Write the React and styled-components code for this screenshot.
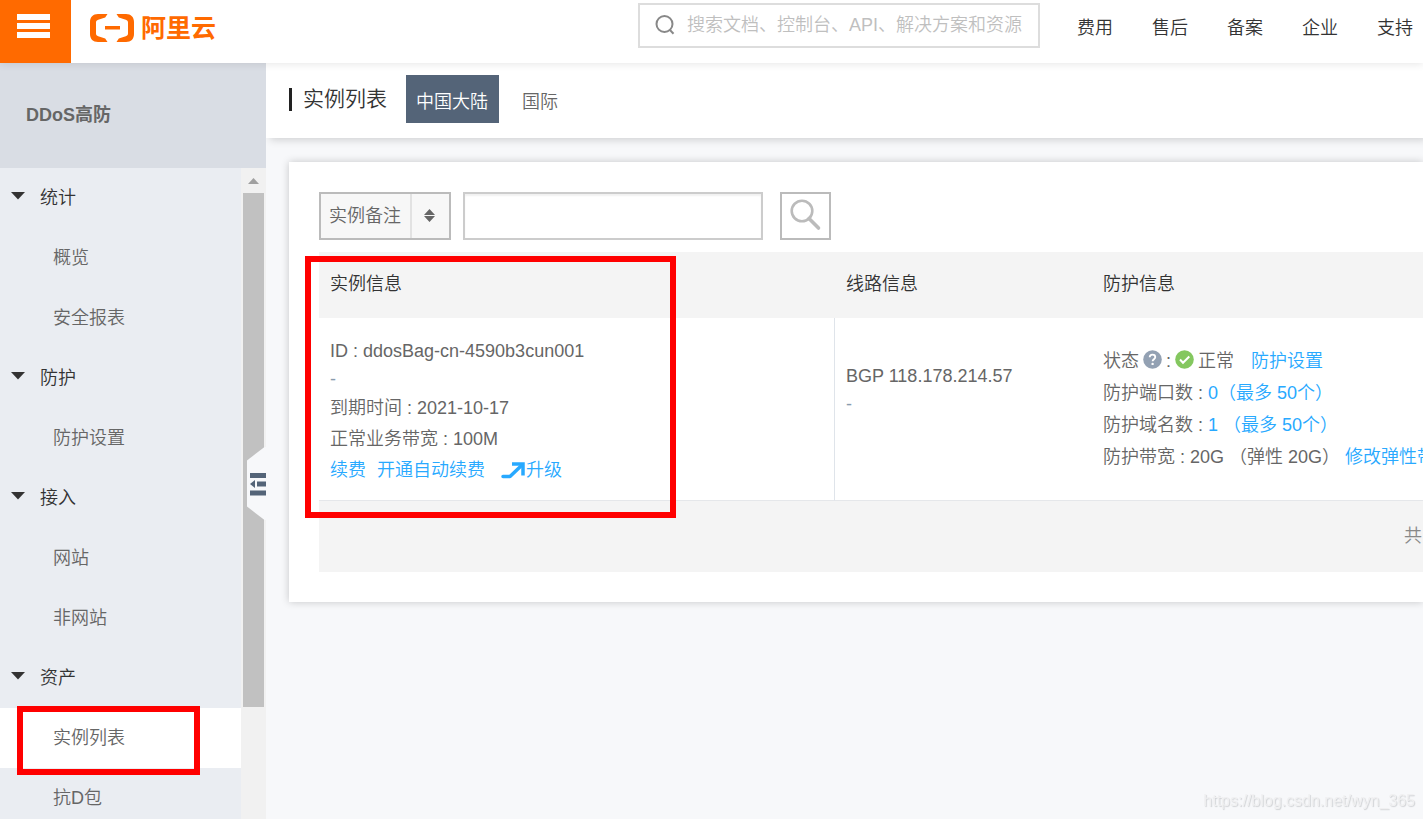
import React from "react";
import styled, { createGlobalStyle } from "styled-components";

const GlobalStyle = createGlobalStyle`
  *, *::before, *::after { box-sizing: border-box; }
  body {
    margin: 0;
    background: #f7f8fa;
    color: #666;
    font-family: "Liberation Sans", "Noto Sans CJK SC", sans-serif;
    font-size: 18px;
    font-weight: 350;
  }
  button, input, select { font: inherit; color: inherit; margin: 0; border-radius: 0; }
  a { text-decoration: none; color: inherit; }
`;

const Page = styled.div`
  display: flex;
  flex-direction: column;
  height: 100vh;
  overflow: hidden;
`;

/* ---------- top bar ---------- */

const TopBar = styled.header`
  position: relative;
  z-index: 2;
  display: flex;
  align-items: flex-start;
  flex: none;
  height: 63px;
  background: #fff;
  box-shadow: 0 1px 8px rgba(0, 0, 0, 0.1);
`;

const MenuButton = styled.button`
  display: flex;
  flex-direction: column;
  gap: 3px;
  width: 71px;
  height: 63px;
  padding: 14px 21px 0 17px;
  border: 0;
  background: #ff6a00;
`;

const MenuBar = styled.span`
  height: 6px;
  width: 33px;
  background: #fff;
`;

const Logo = styled.a`
  display: flex;
  align-items: center;
  gap: 7px;
  height: 56px;
  margin-left: 19px;
  color: #ff6a00;
`;

const LogoName = styled.span`
  padding-bottom: 4px;
  font-size: 25px;
  font-weight: 700;
`;

const SearchBox = styled.label`
  display: flex;
  align-items: center;
  gap: 11px;
  width: 402px;
  height: 45px;
  margin: 3px 37px 0 auto;
  padding: 0 14px;
  border: 2px solid #ddd;
  svg { margin-bottom: 1px; }
`;

const SearchInput = styled.input`
  flex: 1;
  min-width: 0;
  padding: 0;
  border: 0;
  outline: 0;
  background: none;
  &::placeholder { color: #bfbfbf; opacity: 1; }
`;

const TopNav = styled.nav`
  display: flex;
  gap: 39px;
  margin-right: 10px;
  color: #333;
  line-height: 56px;
  white-space: nowrap;
`;

/* ---------- sidebar ---------- */

const Body = styled.div`
  display: flex;
  flex: 1;
  min-height: 0;
`;

const Sidebar = styled.aside`
  position: relative;
  display: flex;
  flex-direction: column;
  flex: none;
  width: 266px;
  background: #eaedf2;
`;

const SidebarTitle = styled.h2`
  flex: none;
  height: 105px;
  margin: 0;
  padding-left: 26px;
  background: #d9dde4;
  font-size: 18px;
  font-weight: 700;
  line-height: 105px;
`;

const SidebarBody = styled.div`
  display: flex;
  flex: 1;
  min-height: 0;
`;

const SideNav = styled.nav`
  flex: 1;
  overflow: hidden;
`;

const GroupButton = styled.button`
  display: flex;
  align-items: center;
  gap: 15px;
  width: 100%;
  height: 60px;
  padding: 0 12px 4px 11px;
  border: 0;
  background: none;
  color: #333;
`;

const SideLink = styled.a`
  position: relative;
  display: block;
  height: 60px;
  padding-left: 53px;
  line-height: 60px;
  background: ${(p) => (p.$active ? "#fff" : "transparent")};
`;

const Track = styled.div`
  display: flex;
  flex-direction: column;
  width: 25px;
  padding: 0 2px;
  background: #f1f1f1;
`;

const TrackArrow = styled.span`
  display: flex;
  align-items: center;
  justify-content: center;
  flex: none;
  height: 25px;
`;

const Thumb = styled.div`
  height: 79%;
  width: 21px;
  background: #c1c1c1;
`;

const CollapseButton = styled.button`
  position: absolute;
  right: 0;
  top: 384px;
  width: 19px;
  height: 73px;
  padding: 0;
  border: 0;
  background: none;
  svg { display: block; }
`;

/* ---------- content ---------- */

const Main = styled.main`
  flex: 1;
  min-width: 0;
  overflow: hidden;
`;

const TitleBar = styled.div`
  display: flex;
  align-items: center;
  height: 75px;
  padding: 0 0 3px 23px;
  background: #fff;
  box-shadow: 4px 2px 8px rgba(0, 0, 0, 0.16);
`;

const Title = styled.h1`
  display: flex;
  align-items: center;
  gap: 11px;
  margin: 0 19px 0 0;
  color: #333;
  font-size: 21px;
  font-weight: 350;
  white-space: nowrap;
  line-height: 30px;
  &::before { content: ""; width: 3px; height: 23px; background: #222; }
`;

const Tab = styled.button`
  height: 48px;
  margin-right: 13px;
  padding: 1px 11px 0 10px;
  border: 0;
  background: ${(p) => (p.$active ? "#546478" : "transparent")};
  color: ${(p) => (p.$active ? "#fff" : "#666")};
`;

const Card = styled.section`
  margin: 24px 0 0 23px;
  padding: 30px 0 30px 30px;
  background: #fff;
  box-shadow: 0 0 8px rgba(0, 0, 0, 0.2);
`;

const Filters = styled.form`
  display: flex;
  height: 48px;
  margin-bottom: 12px;
`;

const SelectBox = styled.div`
  display: grid;
  grid-template-columns: 89px 39px;
  width: 132px;
  margin-right: 12px;
  border: 2px solid #bbb;
  background: #f7f7f7;
`;

const Select = styled.select`
  grid-area: 1 / 1 / 2 / 3;
  appearance: none;
  padding: 0 0 0 8px;
  border: 0;
  outline: 0;
  background: none;
`;

const SelectMark = styled.span`
  grid-area: 1 / 2 / 2 / 3;
  display: flex;
  align-items: center;
  justify-content: center;
  padding: 0 2px 2px 0;
  border-left: 2px solid #e2e2e2;
  pointer-events: none;
`;

const FilterInput = styled.input`
  width: 300px;
  margin-right: 17px;
  padding: 0 10px;
  border: 2px solid #ccc;
  background: #fff;
  box-shadow: inset 0 2px 2px rgba(0, 0, 0, 0.06);
`;

const FilterButton = styled.button`
  width: 51px;
  padding: 0;
  border: 2px solid #bbb;
  background: #fff;
  svg { display: block; margin: 0 0 2px 8px; }
`;

const Table = styled.table`
  width: 100%;
  table-layout: fixed;
  border-collapse: separate;
  border-spacing: 0;
`;

const Col = styled.col`
  width: ${(p) => p.$width};
`;

const Th = styled.th`
  height: 66px;
  padding: 0 11px 6px;
  background: #f4f4f4;
  color: #333;
  font-weight: 350;
  text-align: left;
`;

const Td = styled.td`
  position: relative;
  height: 183px;
  padding: ${(p) => p.$above || "0"} 0 ${(p) => p.$below || "0"} 11px;
  border-bottom: 1px solid #e5e7ea;
  border-right: ${(p) => (p.$divided ? "1px solid #dfe4ea" : "0")};
  overflow: ${(p) => (p.$clip ? "hidden" : "visible")};
  white-space: nowrap;
  vertical-align: middle;
`;

const Line = styled.div`
  display: flex;
  align-items: center;
  height: ${(p) => p.$height};
  line-height: ${(p) => p.$height};
  gap: ${(p) => p.$gap || "0"};
  white-space: pre;
  color: ${(p) => (p.$faint ? "#8a9bae" : "inherit")};
`;

const StatusLine = styled(Line)`
  svg { margin-bottom: 4px; }
`;

const Link = styled.a`
  color: #28a9ff;
`;

const UpgradeLink = styled(Link)`
  display: flex;
  align-items: center;
  gap: 1px;
  margin-left: 5px;
`;

const SettingsLink = styled(Link)`
  margin-left: 13px;
`;

const FootCell = styled.td`
  height: 71px;
  padding: 0 1px 5px 0;
  background: #f4f4f4;
  color: #888;
  text-align: right;
`;

/* ---------- overlays ---------- */

const RedFrame = styled.span`
  position: absolute;
  border: 6px solid #f00;
  pointer-events: none;
`;

const LinkFrame = styled(RedFrame)`
  top: -2px;
  left: 17px;
  width: 183px;
  height: 69px;
`;

const CellFrame = styled(RedFrame)`
  top: -62px;
  left: -14px;
  width: 371px;
  height: 262px;
`;

const Watermark = styled.span`
  position: fixed;
  right: 8px;
  bottom: 8px;
  color: #f0f0f1;
  font-size: 16px;
  line-height: 20px;
  text-shadow: 1px 1px 1px #d0d2d5;
`;

/* ---------- icons ---------- */

const LogoMark = () => (
  <svg width="44" height="28" viewBox="0 0 44 28" fill="currentColor" aria-hidden="true">
    <path d="M17.500 0H8C3 0 0 3 0 8v12c0 5 3 8 8 8h9.500l-2.300-3.600-7-2.200C6.800 21.800 6 20.800 6 19.500v-11c0-1.300.8-2.300 2.200-2.700l7-2.200z" />
    <path d="M26.500 0H36c5 0 8 3 8 8v12c0 5-3 8-8 8h-9.500l2.300-3.600 7-2.200c1.400-.4 2.200-1.400 2.200-2.700v-11c0-1.300-.8-2.300-2.200-2.700l-7-2.200z" />
    <path d="M15 12h15v3.500H15z" />
  </svg>
);

const SearchIcon = () => (
  <svg width="22" height="22" viewBox="0 0 22 22" fill="none" stroke="#888" strokeWidth="2" aria-hidden="true">
    <circle cx="10.500" cy="10" r="8" />
    <path d="M15.500 15.500l4 4.200" />
  </svg>
);

const BigSearchIcon = () => (
  <svg width="32" height="32" viewBox="0 0 32 32" fill="none" stroke="#bbb" aria-hidden="true">
    <circle cx="12" cy="12" r="10.300" strokeWidth="2.600" />
    <path d="M19 19.500l9.500 9.500" strokeWidth="3.600" strokeLinecap="round" />
  </svg>
);

const GroupArrow = () => (
  <svg width="14" height="8" viewBox="0 0 14 8" fill="#333" aria-hidden="true">
    <path d="M0 0h14L7 7.500z" />
  </svg>
);

const SortArrows = () => (
  <svg width="11" height="13" viewBox="0 0 11 13" fill="#666" aria-hidden="true">
    <path d="M5.500 0L11 6H0zM0 7h11l-5.500 6z" />
  </svg>
);

const ScrollArrow = () => (
  <svg width="11" height="6" viewBox="0 0 11 6" fill="#a0a0a0" aria-hidden="true">
    <path d="M5.500 0L11 6H0z" />
  </svg>
);

const CollapseIcon = () => (
  <svg width="19" height="73" viewBox="0 0 19 73" aria-hidden="true">
    <path d="M19 0h-1.500L0 13.500v46L17.500 73H19z" fill="#f7f8fa" />
    <path d="M3 26h16v5H3zM10 34.500h9v5h-9zM3 43.500h16v5H3zM3 37l5-4v8z" fill="#546478" />
  </svg>
);

const HelpIcon = () => (
  <svg width="19" height="19" viewBox="0 0 19 19" role="img" aria-label="帮助">
    <circle cx="9.500" cy="9.500" r="9.300" fill="#93a1b3" />
    <path d="M6.700 7.300c0-1.700 1.200-2.700 2.800-2.700s2.800 1 2.800 2.500c0 2.100-2.700 2.100-2.700 4.200" fill="none" stroke="#fff" strokeWidth="1.800" />
    <circle cx="9.600" cy="13.900" r="1.200" fill="#fff" />
  </svg>
);

const OkIcon = () => (
  <svg width="19" height="19" viewBox="0 0 19 19" aria-hidden="true">
    <circle cx="9.500" cy="9.500" r="9.300" fill="#84c75f" />
    <path d="M5 9.500l3 3.200L14.300 6.500" fill="none" stroke="#fff" strokeWidth="2" />
  </svg>
);

const UpgradeIcon = () => (
  <svg width="24" height="17" viewBox="0 0 24 17" fill="none" stroke="#28a9ff" aria-hidden="true">
    <path d="M2 14.500h7L20 4" strokeWidth="3.500" strokeLinecap="round" strokeLinejoin="round" />
    <path d="M11 2h11v11.500" strokeWidth="3.500" />
  </svg>
);

const groups = [
  { name: "统计", items: ["概览", "安全报表"] },
  { name: "防护", items: ["防护设置"] },
  { name: "接入", items: ["网站", "非网站"] },
  { name: "资产", items: ["实例列表", "抗D包"] },
];

export default function App() {
  return (
    <Page>
      <GlobalStyle />
      <TopBar>
        <MenuButton type="button" aria-label="菜单">
          <MenuBar />
          <MenuBar />
          <MenuBar />
        </MenuButton>
        <Logo href="#">
          <LogoMark />
          <LogoName>阿里云</LogoName>
        </Logo>
        <SearchBox>
          <SearchIcon />
          <SearchInput type="text" aria-label="搜索" placeholder="搜索文档、控制台、API、解决方案和资源" />
        </SearchBox>
        <TopNav>
          {["费用", "售后", "备案", "企业", "支持"].map((name) => (
            <a href="#" key={name}>{name}</a>
          ))}
        </TopNav>
      </TopBar>
      <Body>
        <Sidebar>
          <SidebarTitle>DDoS高防</SidebarTitle>
          <SidebarBody>
            <SideNav>
              {groups.map((group) => (
                <React.Fragment key={group.name}>
                  <GroupButton type="button">
                    <GroupArrow />
                    {group.name}
                  </GroupButton>
                  {group.items.map((item) => (
                    <SideLink href="#" key={item} $active={item === "实例列表"}>
                      {item}
                      {item === "实例列表" && <LinkFrame />}
                    </SideLink>
                  ))}
                </React.Fragment>
              ))}
            </SideNav>
            <Track>
              <TrackArrow><ScrollArrow /></TrackArrow>
              <Thumb />
            </Track>
          </SidebarBody>
          <CollapseButton type="button" aria-label="收起">
            <CollapseIcon />
          </CollapseButton>
        </Sidebar>
        <Main>
          <TitleBar>
            <Title>实例列表</Title>
            <Tab type="button" $active>中国大陆</Tab>
            <Tab type="button">国际</Tab>
          </TitleBar>
          <Card>
            <Filters>
              <SelectBox>
                <Select aria-label="搜索条件">
                  <option>实例备注</option>
                </Select>
                <SelectMark><SortArrows /></SelectMark>
              </SelectBox>
              <FilterInput type="text" aria-label="实例备注" />
              <FilterButton type="button" aria-label="搜索">
                <BigSearchIcon />
              </FilterButton>
            </Filters>
            <Table>
              <colgroup>
                <Col $width="516px" />
                <Col $width="257px" />
                <Col $width="auto" />
              </colgroup>
              <thead>
                <tr>
                  <Th>实例信息</Th>
                  <Th>线路信息</Th>
                  <Th>防护信息</Th>
                </tr>
              </thead>
              <tbody>
                <tr>
                  <Td $divided $above="4px">
                    <Line $height="28px">ID : ddosBag-cn-4590b3cun001</Line>
                    <Line $height="28px" $faint>-</Line>
                    <Line $height="31px">到期时间 : 2021-10-17</Line>
                    <Line $height="31px">正常业务带宽 : 100M</Line>
                    <Line $height="31px" $gap="11px">
                      <Link href="#">续费</Link>
                      <Link href="#">开通自动续费</Link>
                      <UpgradeLink href="#"><UpgradeIcon />升级</UpgradeLink>
                    </Line>
                    <CellFrame />
                  </Td>
                  <Td $below="38px">
                    <Line $height="28px">BGP 118.178.214.57</Line>
                    <Line $height="28px" $faint>-</Line>
                  </Td>
                  <Td $clip>
                    <StatusLine $height="32px" $gap="4px">
                      状态
                      <HelpIcon />
                      <span>:</span>
                      <OkIcon />
                      正常
                      <SettingsLink href="#">防护设置</SettingsLink>
                    </StatusLine>
                    <Line $height="32px">防护端口数 : <Link href="#">0（最多 50个）</Link></Line>
                    <Line $height="32px">防护域名数 : <Link href="#">1 （最多 50个）</Link></Line>
                    <Line $height="32px">防护带宽 : 20G （弹性 20G） <Link href="#">修改弹性带宽</Link></Line>
                  </Td>
                </tr>
              </tbody>
              <tfoot>
                <tr>
                  <FootCell colSpan={3}>共</FootCell>
                </tr>
              </tfoot>
            </Table>
          </Card>
        </Main>
      </Body>
      <Watermark>https://blog.csdn.net/wyn_365</Watermark>
    </Page>
  );
}
